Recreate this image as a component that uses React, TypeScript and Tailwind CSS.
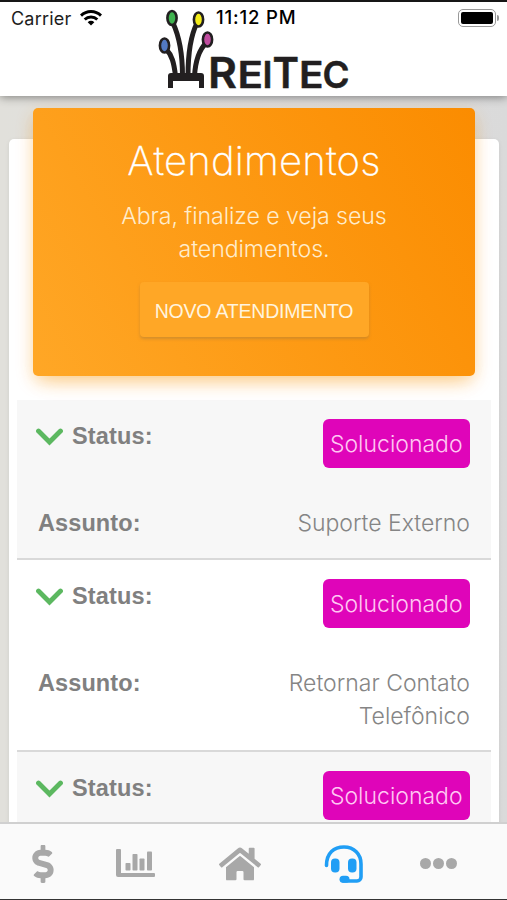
import type { ReactNode } from "react";
import { FaDollarSign, FaHome } from "react-icons/fa";

const light = "font-['Inter','Liberation_Sans',sans-serif] font-light";

function Logo() {
  return (
    <svg width="200" height="96" viewBox="155 2 200 96" className="absolute left-[155px] top-0 overflow-visible">
      <g fill="none" stroke="#221f20" strokeWidth="5">
        <path d="M173 23C179 36 182.500 50 182.500 76" />
        <path d="M197 23C191 35 188 52 188 76" />
        <path d="M166 49C172 55 174 63 175.500 76" />
        <path d="M206 43C199 50 195.500 60 194.500 76" />
      </g>
      <path d="M168 88V76a3 3 0 0 1 3-3h30a3 3 0 0 1 3 3v12h-5v-7h-26v7z" fill="#221f20" />
      <g stroke="#221f20" strokeWidth="2.600">
        <ellipse cx="172" cy="18" rx="4.600" ry="7" fill="#3fb34f" />
        <ellipse cx="198.500" cy="19.500" rx="4.600" ry="7" fill="#f3ec19" />
        <ellipse cx="164.500" cy="45.500" rx="4.600" ry="7" fill="#5279c4" />
        <ellipse cx="207.500" cy="39.500" rx="4.600" ry="7" fill="#c04c9f" />
      </g>
      <g fill="#221f20" stroke="#221f20" strokeWidth=".5" strokeLinejoin="round" fontFamily="Inter, sans-serif" fontWeight="600">
        <text x="208" y="88" fontSize="43" textLength="29" lengthAdjust="spacingAndGlyphs">R</text>
        <text x="237.500" y="88" fontSize="37" textLength="25.500" lengthAdjust="spacingAndGlyphs">E</text>
        <text x="262.500" y="88" fontSize="37" textLength="10" lengthAdjust="spacingAndGlyphs">I</text>
        <text x="272.500" y="88" fontSize="43" textLength="26.500" lengthAdjust="spacingAndGlyphs">T</text>
        <text x="299" y="88" fontSize="37" textLength="24.500" lengthAdjust="spacingAndGlyphs">E</text>
        <text x="322.500" y="88" fontSize="37" textLength="27" lengthAdjust="spacingAndGlyphs">C</text>
      </g>
    </svg>
  );
}

function WifiIcon() {
  return (
    <svg width="22" height="16" viewBox="0 0 22 16" fill="none" stroke="#000" strokeWidth="2.900">
      <path d="M1 5.600a14.200 14.200 0 0 1 20 0" />
      <path d="M4.700 9.500a9 9 0 0 1 12.600 0" />
      <path d="M11 15.500 7.700 12.200a4.700 4.700 0 0 1 6.600 0z" fill="#000" stroke="none" />
    </svg>
  );
}

function Header() {
  return (
    <header className="relative z-10 h-24 shrink-0 border-t-2 border-[#161616] bg-white shadow-[0_1px_9px_rgba(0,0,0,0.45)]">
      <div className="flex h-8 items-center pl-[11px] pr-2 font-['Inter','Liberation_Sans',sans-serif] text-black">
        <span className="w-[69px] text-[18px] tracking-[0.2px] text-[#1d1d1d]">Carrier</span>
        <WifiIcon />
        <span className="ml-[114px] whitespace-nowrap text-[18.500px] font-medium tracking-[0.85px]">11:12 PM</span>
        <span className="ml-auto flex items-center gap-px">
          <span className="flex h-[18px] w-[38px] rounded-[5px] border border-[#999] p-[2px]">
            <span className="flex-1 rounded-[2px] bg-black" />
          </span>
          <span className="h-[6px] w-[2px] rounded-r bg-[#999]" />
        </span>
      </div>
      <Logo />
    </header>
  );
}

function Hero() {
  return (
    <section className="relative mx-6 -mt-[31px] flex h-[268px] shrink-0 flex-col items-center rounded-[5px] bg-[linear-gradient(60deg,#ffa726,#fb8c00)] text-center shadow-[0_12px_20px_-10px_rgba(255,152,0,0.28),0_4px_20px_rgba(0,0,0,0.02),0_6px_18px_-1px_rgba(255,152,0,0.32)]">
      <h1 className="mt-[29px] font-['Inter','Liberation_Sans',sans-serif] text-[40px] font-extralight leading-[48px] tracking-[0.2px] text-white [-webkit-text-stroke:0.3px_white]">Atendimentos</h1>
      <p className={`mt-[15px] text-[23.200px] leading-[33px] tracking-[-0.1px] text-[#ffeccb] ${light}`}>
        Abra, finalize e veja seus
        <br />
        atendimentos.
      </p>
      <button className="mt-[16px] h-[55px] w-[229px] whitespace-nowrap rounded bg-[#ffa726] pt-1 font-['Liberation_Sans',sans-serif] text-[19.500px] tracking-[-0.2px] text-[#fff4df] shadow-[0_2px_3px_rgba(170,125,60,0.5)]">
        NOVO ATENDIMENTO
      </button>
    </section>
  );
}

function Ticket({ subject, striped = false }: { subject: ReactNode; striped?: boolean }) {
  return (
    <article className={`border-b-2 border-[#d9d9d9] pb-[17.500px] pl-[21px] pr-[21px] pt-[19px] font-['Liberation_Sans',sans-serif] text-[23.500px] leading-[33px] text-[#808080] ${striped ? "bg-[#f7f7f7]" : "bg-white"}`}>
      <div className="flex items-start justify-between">
        <div className="flex items-center gap-[9px] pt-px">
          <svg width="27" height="18" viewBox="0 0 27 18" className="-ml-[2px] mt-px">
            <path d="M2.500 3 13.500 14 24.500 3" fill="none" stroke="#5cb860" strokeWidth="4.800" strokeLinecap="round" />
          </svg>
          <strong className="tracking-[0.15px]">Status:</strong>
        </div>
        <span className={`h-[49px] w-[147.500px] rounded-[6px] bg-[#df05b9] text-center text-[23px] leading-[50px] text-[#ffc8f3] ${light}`}>Solucionado</span>
      </div>
      <div className="mt-[39px] flex items-start justify-between">
        <strong className="tracking-[0.1px]">Assunto:</strong>
        <span className={`text-right text-[23px] text-[#858585] ${light}`}>{subject}</span>
      </div>
    </article>
  );
}

function ChartIcon() {
  return (
    <svg width="39" height="29" viewBox="0 0 39 29" fill="#a8a8a8">
      <path d="M1 0h3a1 1 0 0 1 1 1v23h33a1 1 0 0 1 1 1v2a1 1 0 0 1-1 1H2a2 2 0 0 1-2-2V1a1 1 0 0 1 1-1z" />
      <rect x="9.500" y="14" width="5" height="7.500" rx=".8" />
      <rect x="16.500" y="5" width="5" height="16.500" rx=".8" />
      <rect x="23.500" y="9.500" width="5" height="12" rx=".8" />
      <rect x="31" y="2.500" width="5" height="19" rx=".8" />
    </svg>
  );
}

function HeadsetIcon() {
  return (
    <svg width="40" height="40" viewBox="0 0 40 40">
      <path d="M2.500 21.500C2.500 9 10 3 20 3s17 7 17 17v13a4 4 0 0 1-4 4H19" fill="none" stroke="#209ef5" strokeWidth="3.600" strokeLinecap="round" />
      <rect x="7" y="14.500" width="8.500" height="14" rx="4" fill="#209ef5" />
      <rect x="24" y="14.500" width="8.500" height="14" rx="4" fill="#209ef5" />
      <rect x="15.500" y="31.800" width="10" height="7" rx="3.500" fill="#209ef5" />
    </svg>
  );
}

function TabBar() {
  return (
    <nav className="flex h-[78px] shrink-0 items-center border-b border-t-2 border-b-[#333] border-t-[#d0d0d0] bg-[#fafafa] text-[#a8a8a8]">
      <span className="flex w-[86px] justify-center pt-1"><FaDollarSign size={38} /></span>
      <span className="flex w-[99px] justify-center pt-1"><ChartIcon /></span>
      <span className="flex w-[109px] justify-center pt-1"><FaHome size={42} /></span>
      <span className="flex w-[99px] justify-center pt-1"><HeadsetIcon /></span>
      <span className="flex w-[90px] justify-center gap-[2px] pt-1">
        <i className="size-[11px] rounded-full bg-current" />
        <i className="size-[11px] rounded-full bg-current" />
        <i className="size-[11px] rounded-full bg-current" />
      </span>
    </nav>
  );
}

export default function App() {
  return (
    <div className="flex h-[900px] w-[507px] flex-col overflow-hidden bg-[linear-gradient(90deg,#e1e0db,#e0e0e0_40%,#dadada)]">
      <Header />
      <main className="min-h-0 flex-1 overflow-hidden pl-[9px] pr-2 pt-[43px]">
        <div className="flex h-[900px] flex-col rounded-[5px] bg-white shadow-[0_1px_4px_rgba(0,0,0,0.08)]">
          <Hero />
          <div className="mx-2 mt-6">
            <Ticket striped subject="Suporte Externo" />
            <Ticket subject={<>Retornar Contato<br />Telefônico</>} />
            <Ticket striped subject="Suporte Externo" />
          </div>
        </div>
      </main>
      <TabBar />
    </div>
  );
}
